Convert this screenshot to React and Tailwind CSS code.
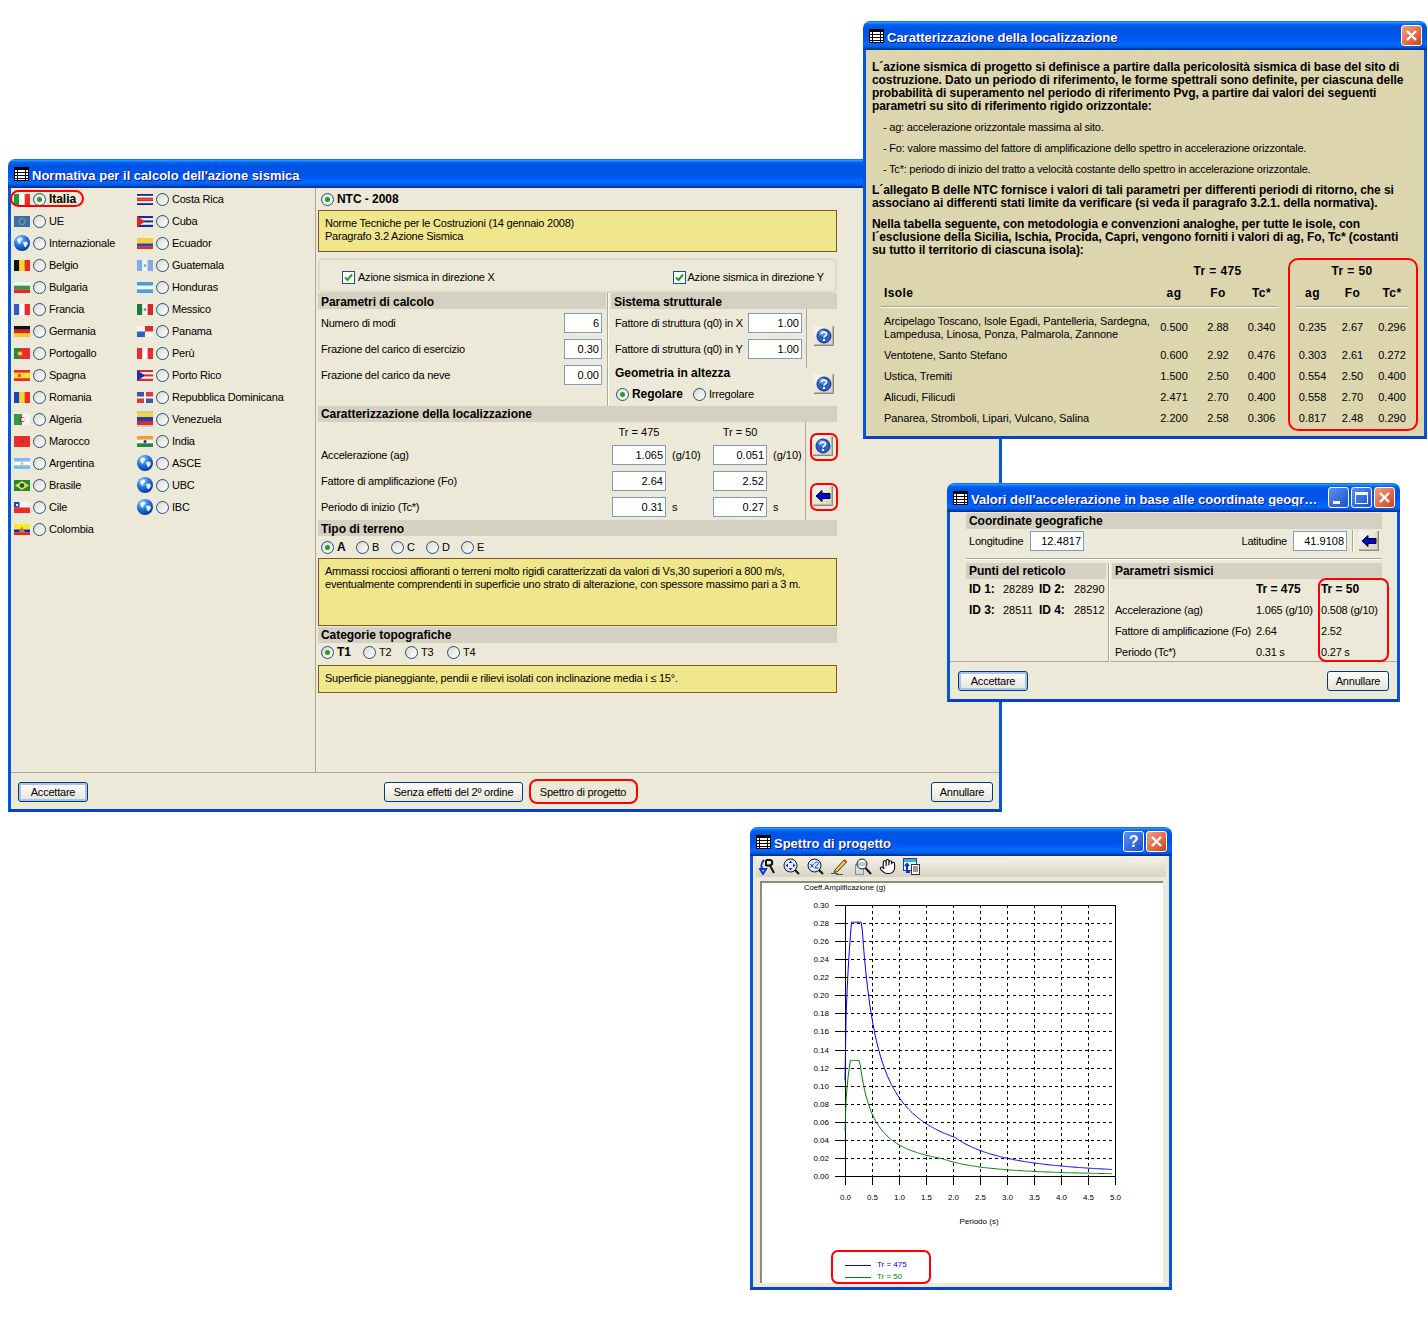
import { Hand } from 'lucide-react';

const curve = (peak, start, t1, tc, td) => {
  const pts = [];
  for (let t = 0; t <= 4.94; t += 0.02) {
    let v;
    if (t < t1) v = start + ((peak - start) * Math.sqrt(t)) / Math.sqrt(t1);
    else if (t < tc) v = peak;
    else if (t < td) v = (peak * tc) / t;
    else v = (peak * tc * td) / (t * t);
    pts.push(`${(845 + t * 54).toFixed(1)},${(1176 - v * 903.3).toFixed(1)}`);
  }
  return pts.join(' ');
};

// small helpers for flags
const V = ({ c }) => c.map((col, i) => <rect key={i} x={(i * 16) / c.length} y="0" width={16 / c.length + 0.1} height="11" fill={col} />);
const H = ({ c }) => c.map((col, i) => <rect key={i} x="0" y={(i * 11) / c.length} width="16" height={11 / c.length + 0.1} fill={col} />);

const Globe = () => (
  <svg width="16" height="16" viewBox="0 0 16 16">
    <defs>
      <radialGradient id="globe" cx="35%" cy="25%" r="80%">
        <stop offset="0" stopColor="#9fd0ff" />
        <stop offset="0.5" stopColor="#1f78e0" />
        <stop offset="1" stopColor="#06309a" />
      </radialGradient>
    </defs>
    <circle cx="8" cy="8" r="8" fill="url(#globe)" />
    <path d="M3 4 L7 2.5 L8.5 4.5 L6.5 6.5 L6 9 L4 7.5 Z M9 7 L13 6.5 L14 9 L11.5 12.5 L10 11 Z" fill="#fff" opacity="0.9" />
  </svg>
);

const flagArt = {
  Italia: <V c={['#1f9a3a', '#ffffff', '#ee2a2a']} />,
  UE: (<><rect width="16" height="11" fill="#3c6fa8" /><circle cx="8" cy="5.5" r="3" fill="none" stroke="#e8dc70" strokeDasharray="1 1" /></>),
  Belgio: <V c={['#111111', '#f5dc1e', '#ee2a2a']} />,
  Bulgaria: <H c={['#f4f4f4', '#2c9a46', '#e52a2a']} />,
  Francia: <V c={['#3558c8', '#ffffff', '#ee2a2a']} />,
  Germania: <H c={['#111111', '#e02020', '#f5c81e']} />,
  Portogallo: (<><rect width="16" height="11" fill="#ee2a2a" /><rect width="6" height="11" fill="#1f8a3a" /><circle cx="6" cy="5.5" r="2.6" fill="#f0c850" stroke="#c05020" /></>),
  Spagna: (<><H c={['#e52a2a', '#f7e020', '#f7e020', '#e52a2a']} /><rect x="4" y="4" width="3" height="3" fill="#d06030" /></>),
  Romania: <V c={['#2040b8', '#f7d820', '#ee2a2a']} />,
  Algeria: (<><V c={['#2c9a46', '#f4f4f4']} /><circle cx="8" cy="5.5" r="2.6" fill="#e02020" /><circle cx="9" cy="5.5" r="1.8" fill="#f4f4f4" /></>),
  Marocco: (<><rect width="16" height="11" fill="#ee2a2a" /><circle cx="8" cy="5.5" r="1.3" fill="#2a7a30" /></>),
  Argentina: (<><H c={['#79bdf0', '#ffffff', '#79bdf0']} /><circle cx="8" cy="5.5" r="1.5" fill="#f0c840" /></>),
  Brasile: (<><rect width="16" height="11" fill="#1f8a3a" /><path d="M8 1 L15 5.5 L8 10 L1 5.5 Z" fill="#f0e020" /><circle cx="8" cy="5.5" r="2.3" fill="#1840a0" /></>),
  Cile: (<><H c={['#f4f4f4', '#ee2a2a']} /><rect width="5.5" height="5.5" fill="#2040c8" /><rect x="2" y="2" width="2" height="2" fill="#fff" /></>),
  Colombia: (<><rect width="16" height="5.5" fill="#f7ee20" /><rect y="5.5" width="16" height="3" fill="#1a20d0" /><rect y="8.5" width="16" height="2.5" fill="#ee2020" /><path d="M8 2.5 L11 8 H5 Z" fill="#b89020" /></>),
  'Costa Rica': <H c={['#1a2a80', '#f4f4f4', '#e02a2a', '#e02a2a', '#f4f4f4', '#1a2a80']} />,
  Cuba: (<><H c={['#1a2a90', '#f4f4f4', '#1a2a90', '#f4f4f4', '#1a2a90']} /><path d="M0 0 L8 5.5 L0 11 Z" fill="#e02a2a" /></>),
  Ecuador: <H c={['#f5d030', '#f5d030', '#2040c8', '#e02a2a']} />,
  Guatemala: (<><V c={['#79aee8', '#f4f4f4', '#79aee8']} /><circle cx="8" cy="5.5" r="1.3" fill="#80a070" /></>),
  Honduras: <H c={['#4a9be0', '#f4f4f4', '#4a9be0']} />,
  Messico: (<><V c={['#1f7a3a', '#f4f4f4', '#d82a2a']} /><circle cx="8" cy="5.5" r="1.5" fill="#90a060" /></>),
  Panama: (<><rect width="16" height="11" fill="#f4f4f4" /><rect x="8" width="8" height="5.5" fill="#e02a2a" /><rect y="5.5" width="8" height="5.5" fill="#2a60c8" /></>),
  'Perù': <V c={['#ee2a2a', '#ffffff', '#ee2a2a']} />,
  'Porto Rico': (<><H c={['#d82a2a', '#f4f4f4', '#d82a2a', '#f4f4f4', '#d82a2a']} /><path d="M0 0 L8 5.5 L0 11 Z" fill="#2030b0" /></>),
  'Repubblica Dominicana': (<><rect width="16" height="11" fill="#f4f4f4" /><rect width="7" height="4.5" fill="#3a58a8" /><rect x="9" width="7" height="4.5" fill="#e03a3a" /><rect y="6.5" width="7" height="4.5" fill="#e03a3a" /><rect x="9" y="6.5" width="7" height="4.5" fill="#3a58a8" /></>),
  India: (<><H c={['#f49a30', '#f4f4f4', '#1f8a3a']} /><circle cx="8" cy="5.5" r="1.5" fill="#2030a0" /></>),
};

const Flag = ({ name }) => {
  if (name === 'Internazionale' || name === 'ASCE' || name === 'UBC' || name === 'IBC') return <Globe />;
  if (name === 'Venezuela')
    return (
      <svg width="16" height="16" viewBox="0 0 16 16">
        <rect width="16" height="16" fill="#c8c8c8" />
        <rect y="2" width="16" height="4" fill="#f5d820" />
        <rect y="6" width="16" height="4" fill="#2040b0" />
        <rect y="10" width="16" height="4" fill="#e02a2a" />
      </svg>
    );
  return (
    <svg width="16" height="11" viewBox="0 0 16 11">
      {flagArt[name]}
    </svg>
  );
};

const col1 = ['Italia', 'UE', 'Internazionale', 'Belgio', 'Bulgaria', 'Francia', 'Germania', 'Portogallo', 'Spagna', 'Romania', 'Algeria', 'Marocco', 'Argentina', 'Brasile', 'Cile', 'Colombia'];
const col2 = ['Costa Rica', 'Cuba', 'Ecuador', 'Guatemala', 'Honduras', 'Messico', 'Panama', 'Perù', 'Porto Rico', 'Repubblica Dominicana', 'Venezuela', 'India', 'ASCE', 'UBC', 'IBC'];

const strong = 'font-bold text-[12px] tracking-[-0.05px]';

const Radio = ({ checked }) => (
  <span className="w-[13px] h-[13px] shrink-0 rounded-full border border-[#1c5180] bg-gradient-to-br from-[#dcd9cd] to-white flex items-center justify-center">
    {checked && <span className="w-[5px] h-[5px] rounded-full bg-[#21a121]" />}
  </span>
);

const Check = () => (
  <span className="w-[13px] h-[13px] shrink-0 border border-[#1c5180] bg-white flex items-center justify-center">
    <svg width="9" height="9" viewBox="0 0 9 9"><path d="M1 4.5 L3.5 7 L8 1.5" fill="none" stroke="#21a121" strokeWidth="2" /></svg>
  </span>
);

const Label = ({ checked, bold, children, className = '' }) => (
  <div className={`flex items-center gap-[3px] ${className}`}>
    <Radio checked={checked} />
    <span className={bold ? strong : ''}>{children}</span>
  </div>
);

const Head = ({ children, className = 'pt-[1px]' }) => (
  <div className={`h-[16px] bg-[#d4d0c2] pl-[3px] flex items-center whitespace-nowrap ${strong} ${className}`}>{children}</div>
);

const Field = ({ children, className = 'w-[54px]' }) => (
  <div className={`h-[20px] shrink-0 border border-[#7f9db9] bg-white text-right pr-[2px] leading-[18px] tracking-normal ${className}`}>{children}</div>
);

const Note = ({ children, className = '' }) => (
  <div className={`bg-[#f0e68c] border border-[#7b5c1e] pl-[6px] pt-[6px] leading-[13px] whitespace-nowrap ${className}`}>{children}</div>
);

const Btn = ({ children, className = '', primary }) => (
  <div className={`h-[20px] shrink-0 whitespace-nowrap rounded-[3px] border border-[#003c74] bg-gradient-to-b from-white to-[#e6e3d6] flex items-center justify-center ${primary ? 'shadow-[inset_0_0_0_2px_#a9c3ea]' : ''} ${className}`}>{children}</div>
);

const Bevel = ({ children, className = '' }) => (
  <div className={`w-[20px] h-[20px] shrink-0 bg-gradient-to-br from-[#f8f7f2] to-[#d6d2c4] border-b border-r border-[#8d8a7e] shadow-[inset_-1px_-1px_0_#bdb9ab] flex items-center justify-center ${className}`}>{children}</div>
);

const HelpBtn = ({ className }) => (
  <Bevel className={className}>
    <svg width="16" height="16" viewBox="0 0 16 16">
      <circle cx="8" cy="8" r="7" fill="#2a62c8" stroke="#12348c" />
      <circle cx="6" cy="5" r="3" fill="#7fb0f0" opacity="0.6" />
      <path d="M5.5 6 C5.5 3.5 10.5 3.5 10.5 6 C10.5 7.8 8 7.8 8 9.6" fill="none" stroke="#fff" strokeWidth="1.8" />
      <rect x="7" y="11" width="2" height="2" fill="#fff" />
    </svg>
  </Bevel>
);

const ArrowBtn = ({ className }) => (
  <Bevel className={className}>
    <svg width="16" height="14" viewBox="0 0 16 14">
      <path d="M1 7 L7 1.5 V4.5 H15 V9.5 H7 V12.5 Z" fill="#0000e6" stroke="#000" />
    </svg>
  </Bevel>
);

const WinIcon = () => (
  <svg width="15" height="14" viewBox="0 0 15 14" className="shrink-0">
    <rect x="0.5" y="0.5" width="14" height="13" fill="#fff" stroke="#000" />
    <rect x="0" y="0" width="15" height="3" fill="#000" />
    <path d="M0 5.5 H15 M0 8.5 H15 M0 11.5 H15 M3.5 3 V14 M11.5 3 V14" stroke="#000" />
  </svg>
);

const Cap = ({ kind }) => {
  const red = kind === 'close';
  return (
    <div className={`w-[21px] h-[21px] rounded-[3px] border border-white flex items-center justify-center ${red ? 'bg-gradient-to-br from-[#f0a080] to-[#d03c14]' : 'bg-gradient-to-br from-[#5a90f0] to-[#1a4fd0]'}`}>
      {kind === 'close' && <svg width="13" height="13" viewBox="0 0 13 13"><path d="M2 2 L11 11 M11 2 L2 11" stroke="#fff" strokeWidth="2.4" /></svg>}
      {kind === 'help' && <span className="text-white font-bold text-[16px] leading-none">?</span>}
      {kind === 'min' && <span className="w-[7px] h-[3px] bg-white mt-[9px] mr-[5px]" />}
      {kind === 'max' && <span className="w-[13px] h-[12px] border border-white border-t-[3px]" />}
    </div>
  );
};

const Win = ({ title, caps = [], className, bodyClass = '', children }) => (
  <div className={`absolute flex flex-col ${className}`}>
    <div className="h-[29px] shrink-0 rounded-t-[7px] pl-[6px] pr-[5px] flex items-center gap-[3px] bg-[linear-gradient(180deg,#0058ee_0%,#3593ff_4%,#288eff_6%,#127dff_8%,#036ffc_10%,#0262ee_14%,#0057e5_20%,#0054e3_24%,#0055eb_56%,#005bf5_66%,#026afe_76%,#0062ef_86%,#0052d6_92%,#0040ab_94%,#003092_100%)]">
      <WinIcon />
      <span className="flex-1 pt-[3px] text-white font-bold text-[13px] tracking-[0px] whitespace-nowrap overflow-hidden [text-shadow:1px_1px_#0f1089]">{title}</span>
      <div className="flex gap-[2px]">{caps.map((c) => <Cap key={c} kind={c} />)}</div>
    </div>
    <div className={`flex-1 min-h-0 border-x-[3px] border-b-[3px] border-x-[#0855dd] border-b-[#0840c8] ${bodyClass}`}>{children}</div>
  </div>
);

const Ring = ({ className }) => <div className={`absolute border-2 border-[#ff0000] ${className}`} />;

const Country = ({ name, checked, bold }) => (
  <div className="h-[22px] flex items-center">
    <div className="w-[16px] flex justify-center"><Flag name={name} /></div>
    <div className="ml-[3px]"><Label checked={checked} bold={bold}>{name}</Label></div>
  </div>
);

function MainWindow() {
  return (
    <Win title="Normativa per il calcolo dell'azione sismica" className="left-[8px] top-[159px] w-[994px] h-[653px]" bodyClass="bg-[#ece9d8] flex flex-col">
      <div className="flex h-[585px] border-b border-[#aca899]">
        <div className="w-[305px] border-r border-[#aca899] pl-[3px] flex">
          <div className="w-[123px]">
            {col1.map((n, i) => <Country key={n} name={n} checked={i === 0} bold={i === 0} />)}
          </div>
          <div>
            {col2.map((n) => <Country key={n} name={n} />)}
          </div>
        </div>

        <div className="pl-[2px] w-[521px]">
          <div className="h-[22px] pl-[3px] flex items-center"><Label checked bold>NTC - 2008</Label></div>
          <Note className="h-[42px]">Norme Tecniche per le Costruzioni (14 gennaio 2008)<br />Paragrafo 3.2 Azione Sismica</Note>
          <div className="mt-[6px] h-[35px] rounded-[5px] border-2 border-[#dcd9c9] pl-[22px] pr-[11px] pt-[3px] flex items-center justify-between">
            <div className="flex items-center gap-[3px]"><Check />Azione sismica in direzione X</div>
            <div className="flex items-center gap-[2px]"><Check />Azione sismica in direzione Y</div>
          </div>

          <div className="flex">
            <div className="w-[288px]">
              <Head className="pt-[3px]">Parametri di calcolo</Head>
              <div className="pt-[4px] pl-[3px] pr-[4px] flex flex-col gap-[6px]">
                {[['Numero di modi', '6'], ['Frazione del carico di esercizio', '0.30'], ['Frazione del carico da neve', '0.00']].map(([l, v]) => (
                  <div key={l} className="flex items-center justify-between"><span>{l}</span><Field className="w-[38px]">{v}</Field></div>
                ))}
              </div>
            </div>
            <div className="w-[4px] ml-[1px] h-[113px]"><div className="w-[2px] h-full bg-[#aca899] border-r border-white" /></div>
            <div className="w-[226px]">
              <Head className="pt-[3px]">Sistema strutturale</Head>
              <div className="flex h-[59px]">
                <div className="w-[196px] border-r border-[#aca899] pt-[4px] pl-[4px] pr-[4px] flex flex-col gap-[6px]">
                  <div className="flex items-center justify-between whitespace-nowrap"><span>Fattore di struttura (q0) in X</span><Field>1.00</Field></div>
                  <div className="flex items-center justify-between whitespace-nowrap"><span>Fattore di struttura (q0) in Y</span><Field>1.00</Field></div>
                </div>
                <div className="pl-[7px] pt-[17px]"><HelpBtn /></div>
              </div>
              <div className="flex h-[38px]">
                <div className="w-[196px] pl-[4px]">
                  <div className={`-mt-[1px] ${strong}`}>Geometria in altezza</div>
                  <div className="flex items-center mt-[8px] pl-[1px]">
                    <Label checked bold>Regolare</Label>
                    <Label className="ml-[10px]">Irregolare</Label>
                  </div>
                </div>
                <div className="pl-[7px] pt-[6px]"><HelpBtn /></div>
              </div>
            </div>
          </div>

          <Head>Caratterizzazione della localizzazione</Head>
          <div className="flex h-[98px]">
            <div className="w-[488px] border-r border-[#aca899] pt-[4px]">
              <div className="grid grid-cols-[294px_54px_47px_54px_39px] gap-y-[6px] items-center">
                <div />
                <div className="text-center whitespace-nowrap tracking-normal">Tr = 475</div>
                <div />
                <div className="text-center whitespace-nowrap tracking-normal">Tr = 50</div>
                <div />
                {[['Accelerazione (ag)', '1.065', '(g/10)', '0.051', '(g/10)'], ['Fattore di amplificazione (Fo)', '2.64', '', '2.52', ''], ['Periodo di inizio (Tc*)', '0.31', 's', '0.27', 's']].map(([l, a, u, b, w]) => (
                  <div key={l} className="contents">
                    <div className="pl-[3px]">{l}</div>
                    <Field>{a}</Field>
                    <div className="pl-[6px] tracking-normal">{u}</div>
                    <Field>{b}</Field>
                    <div className="pl-[6px] tracking-normal">{w}</div>
                  </div>
                ))}
              </div>
            </div>
            <div className="pl-[7px] pt-[14px] flex flex-col gap-[30px]">
              <HelpBtn />
              <ArrowBtn />
            </div>
          </div>

          <Head className="pt-[2px]">Tipo di terreno</Head>
          <div className="h-[22px] pl-[3px] flex items-center">
            {['A', 'B', 'C', 'D', 'E'].map((l, i) => (
              <div key={l} className="w-[35px]"><Label checked={i === 0} bold={i === 0}>{l}</Label></div>
            ))}
          </div>
          <Note className="h-[68px]">Ammassi rocciosi affioranti o terreni molto rigidi caratterizzati da valori di Vs,30 superiori a 800 m/s,<br />eventualmente comprendenti in superficie uno strato di alterazione, con spessore massimo pari a 3 m.</Note>
          <Head className="mt-[1px] pt-[1px]">Categorie topografiche</Head>
          <div className="h-[22px] pl-[3px] pb-[3px] flex items-center">
            {['T1', 'T2', 'T3', 'T4'].map((l, i) => (
              <div key={l} className="w-[42px]"><Label checked={i === 0} bold={i === 0}>{l}</Label></div>
            ))}
          </div>
          <Note className="h-[28px]">Superficie pianeggiante, pendii e rilievi isolati con inclinazione media i ≤ 15°.</Note>
        </div>
      </div>

      <div className="flex-1 pl-[7px] pr-[6px] pt-[9px] flex items-start">
        <Btn primary className="w-[70px]">Accettare</Btn>
        <Btn className="w-[139px] ml-[296px]">Senza effetti del 2º ordine</Btn>
        <div className="w-[98px] h-[20px] ml-[11px] shrink-0 whitespace-nowrap flex items-center justify-center">Spettro di progetto</div>
        <Btn className="w-[62px] ml-auto">Annullare</Btn>
      </div>
    </Win>
  );
}

const rows = [
  [['Arcipelago Toscano, Isole Egadi, Pantelleria, Sardegna,', 'Lampedusa, Linosa, Ponza, Palmarola, Zannone'], '0.500', '2.88', '0.340', '0.235', '2.67', '0.296'],
  [['Ventotene, Santo Stefano'], '0.600', '2.92', '0.476', '0.303', '2.61', '0.272'],
  [['Ustica, Tremiti'], '1.500', '2.50', '0.400', '0.554', '2.50', '0.400'],
  [['Alicudi, Filicudi'], '2.471', '2.70', '0.400', '0.558', '2.70', '0.400'],
  [['Panarea, Stromboli, Lipari, Vulcano, Salina'], '2.200', '2.58', '0.306', '0.817', '2.48', '0.290'],
];
const tableCols = 'grid grid-cols-[276px_34px_54px_33px_18px_33px_47px_32px]';
const rule = 'h-[21px] border-b border-white shadow-[inset_0_-1px_0_#a9a386] text-center font-bold text-[12px] tracking-[0.4px]';

function InfoWindow() {
  return (
    <Win title="Caratterizzazione della localizzazione" caps={['close']} className="left-[863px] top-[21px] w-[564px] h-[418px]" bodyClass="bg-[#dcd5ae] pl-[6px] pt-[11px] leading-[13px] whitespace-nowrap">
      <div className="font-bold text-[12px] tracking-[-0.07px]">
        L´azione sismica di progetto si definisce a partire dalla pericolosità sismica di base del sito di<br />
        costruzione. Dato un periodo di riferimento, le forme spettrali sono definite, per ciascuna delle<br />
        probabilità di superamento nel periodo di riferimento Pvg, a partire dai valori dei seguenti<br />
        parametri su sito di riferimento rigido orizzontale:
      </div>
      <div className="mt-[8px] pl-[11px] flex flex-col gap-[8px]">
        <div>- ag: accelerazione orizzontale massima al sito.</div>
        <div>- Fo: valore massimo del fattore di amplificazione dello spettro in accelerazione orizzontale.</div>
        <div>- Tc*: periodo di inizio del tratto a velocità costante dello spettro in accelerazione orizzontale.</div>
      </div>
      <div className="mt-[8px] font-bold text-[12px] tracking-[-0.07px]">
        L´allegato B delle NTC fornisce i valori di tali parametri per differenti periodi di ritorno, che si<br />
        associano ai differenti stati limite da verificare (si veda il paragrafo 3.2.1. della normativa).
      </div>
      <div className="mt-[8px] font-bold text-[12px] tracking-[-0.07px]">
        Nella tabella seguente, con metodologia e convenzioni analoghe, per tutte le isole, con<br />
        l´esclusione della Sicilia, Ischia, Procida, Capri, vengono forniti i valori di ag, Fo, Tc* (costanti<br />
        su tutto il territorio di ciascuna isola):
      </div>

      <div className="ml-[9px] mt-[8px] w-[527px]">
        <div className={`${tableCols} font-bold text-[12px] tracking-[0.4px] text-center`}>
          <div />
          <div className="col-span-3">Tr = 475</div>
          <div />
          <div className="col-span-3">Tr = 50</div>
        </div>
        <div className={`${tableCols} mt-[9px]`}>
          <div className={`${rule} !text-left pl-[3px]`}>Isole</div>
          <div className={rule}>ag</div>
          <div className={rule}>Fo</div>
          <div className={rule}>Tc*</div>
          <div />
          <div className={rule}>ag</div>
          <div className={rule}>Fo</div>
          <div className={rule}>Tc*</div>
        </div>
        {rows.map(([names, a, b, c, d, e, f], i) => (
          <div key={names[0]} className={`${tableCols} items-center text-center tracking-normal ${i === 0 ? 'h-[27px] mt-[6px] mb-[4px]' : 'h-[21px]'}`}>
            <div className="text-left pl-[3px] tracking-[-0.1px]">{names.map((n) => <div key={n}>{n}</div>)}</div>
            <div>{a}</div>
            <div>{b}</div>
            <div>{c}</div>
            <div />
            <div>{d}</div>
            <div>{e}</div>
            <div>{f}</div>
          </div>
        ))}
      </div>
    </Win>
  );
}

function CoordWindow() {
  return (
    <Win title="Valori dell'accelerazione in base alle coordinate geogr…" caps={['min', 'max', 'close']} className="left-[947px] top-[483px] w-[453px] h-[219px]" bodyClass="bg-[#ece9d8] flex flex-col">
      <div className="h-[150px] border-b border-[#aca899] pl-[16px] pr-[15px] pt-[1px]">
        <Head>Coordinate geografiche</Head>
        <div className="mt-[1px] pl-[3px] flex items-center h-[22px]">
          <span className="w-[61px]">Longitudine</span>
          <Field>12.4817</Field>
          <span className="ml-auto mr-[6px]">Latitudine</span>
          <Field>41.9108</Field>
          <div className="w-[2px] h-[22px] ml-[5px] bg-[#aca899] border-r border-white" />
          <ArrowBtn className="ml-[5px] mr-[3px]" />
        </div>
        <div className="mt-[6px] h-[2px] bg-[#aca899] border-b border-white" />
        <div className="mt-[3px] flex">
          <div className="w-[140px]">
            <Head>Punti del reticolo</Head>
            <div className="mt-[4px] pl-[3px] flex flex-col gap-[8px] tracking-normal">
              <div className="flex"><b className={`w-[34px] ${strong}`}>ID 1:</b><span className="w-[36px]">28289</span><b className={`w-[35px] ${strong}`}>ID 2:</b><span>28290</span></div>
              <div className="flex"><b className={`w-[34px] ${strong}`}>ID 3:</b><span className="w-[36px]">28511</span><b className={`w-[35px] ${strong}`}>ID 4:</b><span>28512</span></div>
            </div>
          </div>
          <div className="w-[2px] h-[99px] ml-[2px] mr-[2px] bg-[#aca899] border-r border-white" />
          <div className="flex-1">
            <Head>Parametri sismici</Head>
            <div className="mt-[4px] pl-[3px] grid grid-cols-[141px_65px_auto] gap-y-[8px] whitespace-nowrap">
              <div />
              <b className={strong}>Tr = 475</b>
              <b className={strong}>Tr = 50</b>
              <div>Accelerazione (ag)</div><div>1.065 (g/10)</div><div>0.508 (g/10)</div>
              <div>Fattore di amplificazione (Fo)</div><div>2.64</div><div>2.52</div>
              <div>Periodo (Tc*)</div><div>0.31 s</div><div>0.27 s</div>
            </div>
          </div>
        </div>
      </div>
      <div className="flex-1 pl-[8px] pr-[8px] pt-[9px] flex justify-between items-start">
        <Btn primary className="w-[70px]">Accettare</Btn>
        <Btn className="w-[62px]">Annullare</Btn>
      </div>
    </Win>
  );
}

const ToolIcons = () => (
  <div className="flex items-center gap-[7px] pl-[3px]">
    <svg width="17" height="17" viewBox="0 0 17 17">
      <path d="M7 2 H11 C14 2 14 7 11 7.5 L15 15 M7 2 L7 8 M7 7.5 H11" fill="none" stroke="#111" strokeWidth="2" />
      <path d="M5 2 C2 5 2 9 3.5 12 M1 11 L4 16 L7 11 Z" fill="none" stroke="#1038c8" strokeWidth="2" />
    </svg>
    <svg width="17" height="17" viewBox="0 0 17 17">
      <circle cx="7.5" cy="7.5" r="6.5" fill="#e8f0ff" stroke="#111" />
      <path d="M7.5 2.5 L5.5 5 H9.5 Z M7.5 12.5 L5.5 10 H9.5 Z M2.5 7.5 L5 5.5 V9.5 Z M12.5 7.5 L10 5.5 V9.5 Z" fill="#1038c8" />
      <path d="M12 12 L16 16" stroke="#111" strokeWidth="2" />
    </svg>
    <svg width="17" height="17" viewBox="0 0 17 17">
      <circle cx="7.5" cy="7.5" r="6.5" fill="#d8e8ff" stroke="#111" />
      <path d="M3.5 6 L6.5 9.5 M6.5 6 L3.5 9.5 M8 5.5 C8 3.5 11.5 3.5 11.5 5.5 C11.5 7 8 8 8 10 H11.5" fill="none" stroke="#1038c8" />
      <path d="M12 12 L16 16" stroke="#111" strokeWidth="2" />
    </svg>
    <svg width="17" height="17" viewBox="0 0 17 17">
      <path d="M4 12 L13 2 L15.5 4 L6.5 13.5 L3 14.5 Z" fill="#f5d030" stroke="#333" />
      <path d="M13 2 L15.5 4" stroke="#e03030" strokeWidth="2" />
      <path d="M0 15.5 H7 M5 16.5 H12" stroke="#555" />
    </svg>
    <svg width="17" height="17" viewBox="0 0 17 17">
      <rect x="0.5" y="6.5" width="8" height="10" fill="none" stroke="#1038c8" strokeDasharray="1 1" />
      <circle cx="7" cy="6" r="5" fill="#fff" stroke="#111" />
      <path d="M3 5 H11 M3 7 H11" stroke="#60a0a0" />
      <path d="M10.5 10 L16 16" stroke="#111" strokeWidth="2" />
    </svg>
    <Hand size={17} strokeWidth={1.5} fill="#fff" color="#000" />
    <svg width="17" height="17" viewBox="0 0 17 17">
      <rect x="0.5" y="0.5" width="13" height="12" fill="#e8f6ff" stroke="#204080" />
      <rect x="1" y="1" width="12" height="3" fill="#30b8e0" />
      <rect x="8.5" y="6.5" width="8" height="10" fill="#fff" stroke="#333" />
      <path d="M10 9 H15 M10 11 H15 M10 13 H15" stroke="#333" />
      <path d="M4 7 V14 H7 M2 8 L4 6 L6 8" fill="none" stroke="#1038c8" strokeWidth="2" />
    </svg>
  </div>
);

const ChartFrame = () => {
  const ys = [];
  for (let i = 0; i <= 15; i++) ys.push(i);
  const xs = [];
  for (let i = 0; i <= 10; i++) xs.push(i);
  return (
    <svg viewBox="762 883 401 400" width="401" height="400" className="block bg-white">
      <g fontFamily="'Liberation Sans', sans-serif" fontSize="8" letterSpacing="0">
        <text x="804" y="890" fill="#000" fontSize="7.7">Coeff.Amplificazione (g)</text>
        {ys.map((i) => {
          const y = Math.round(1176 - i * 18.07) + 0.5;
          return (
            <g key={i}>
              <path d={`M835 ${y} H845`} stroke="#000" shapeRendering="crispEdges" />
              {i > 0 && i < 15 && <path d={`M845 ${y} H1115`} stroke="#000" strokeDasharray="3 3" shapeRendering="crispEdges" />}
              <text x="829" y={y + 2} textAnchor="end" fill="#000">{(i * 0.02).toFixed(2)}</text>
            </g>
          );
        })}
        {xs.map((i) => {
          const x = 845 + i * 27 + 0.5;
          return (
            <g key={i}>
              <path d={`M${x} 1176 V1185`} stroke="#000" shapeRendering="crispEdges" />
              {i > 0 && i < 10 && <path d={`M${x} 905 V1176`} stroke="#000" strokeDasharray="3 3" shapeRendering="crispEdges" />}
              <text x={x} y="1200" textAnchor="middle" fill="#000">{(i * 0.5).toFixed(1)}</text>
            </g>
          );
        })}
        <rect x="845.5" y="905.5" width="270" height="271" fill="none" stroke="#000" shapeRendering="crispEdges" />
        <polyline points={curve(0.281, 0.106, 0.12, 0.31, 2.03)} fill="none" stroke="#0000ff" />
        <polyline points={curve(0.128, 0.05, 0.1, 0.27, 1.8)} fill="none" stroke="#008000" />
        <text x="979" y="1224" textAnchor="middle" fill="#000">Periodo (s)</text>
        <path d="M845 1265.5 H871" stroke="#0000ff" shapeRendering="crispEdges" />
        <path d="M845 1277.5 H871" stroke="#008000" shapeRendering="crispEdges" />
        <text x="877" y="1267" fill="#0000ff">Tr = 475</text>
        <text x="877" y="1279" fill="#008000">Tr = 50</text>
      </g>
    </svg>
  );
};

function SpectrumWindow() {
  return (
    <Win title="Spettro di progetto" caps={['help', 'close']} className="left-[750px] top-[827px] w-[422px] h-[463px]" bodyClass="bg-[#ece9d8] flex flex-col">
      <div className="mx-[3px] h-[21px] shrink-0 bg-gradient-to-b from-[#f4f2e8] to-[#d8d4c4] flex items-center">
        <ToolIcons />
      </div>
      <div className="mt-[4px] ml-[7px] w-[403px] h-[402px] border-t-2 border-l-2 border-[#8d8a7e] bg-white overflow-hidden">
        <ChartFrame />
      </div>
    </Win>
  );
}

export default function App() {
  return (
    <div className="relative w-[1428px] h-[1324px] bg-white overflow-hidden text-black text-[11px] tracking-[-0.22px] leading-[13px] font-['Liberation_Sans',sans-serif]">
      <MainWindow />
      <SpectrumWindow />
      <CoordWindow />
      <InfoWindow />

      <Ring className="left-[10px] top-[190px] w-[74px] h-[17px] rounded-full" />
      <Ring className="left-[810px] top-[433px] w-[28px] h-[28px] rounded-[7px]" />
      <Ring className="left-[810px] top-[483px] w-[28px] h-[28px] rounded-[7px]" />
      <Ring className="left-[529px] top-[779px] w-[109px] h-[25px] rounded-[8px]" />
      <Ring className="left-[1288px] top-[258px] w-[130px] h-[173px] rounded-[10px]" />
      <Ring className="left-[1318px] top-[578px] w-[71px] h-[84px] rounded-[8px]" />
      <Ring className="left-[831px] top-[1250px] w-[100px] h-[34px] rounded-[7px]" />
    </div>
  );
}
